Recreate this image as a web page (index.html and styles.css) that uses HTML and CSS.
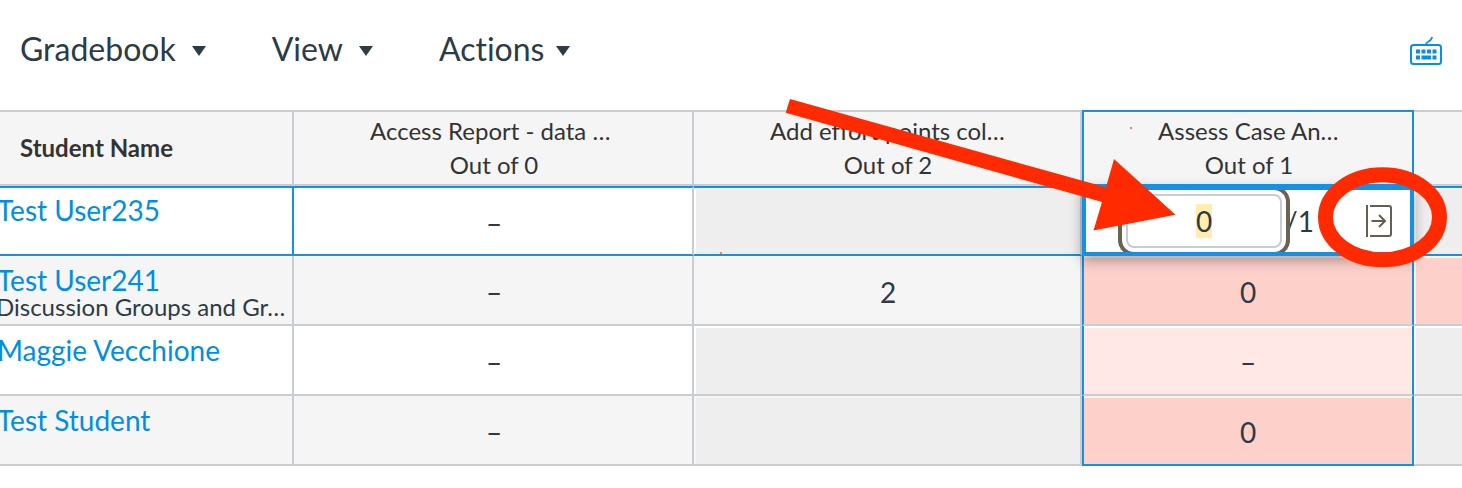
FILE: index.html
```html
<!DOCTYPE html>
<html lang="en">
<head>
<meta charset="utf-8">
<title>Gradebook</title>
<link rel="stylesheet" href="styles.css">
</head>
<body>
<header class="toolbar">
  <nav class="menus" aria-label="Gradebook menus">
    <button class="menu" type="button">Gradebook <span class="caret"></span></button>
    <button class="menu" type="button">View <span class="caret"></span></button>
    <button class="menu menu-tight" type="button">Actions <span class="caret"></span></button>
  </nav>
  <button class="icon-button" type="button" aria-label="Keyboard shortcuts">
    <svg width="32" height="30" viewBox="0 0 32 30" fill="none" stroke="currentColor">
      <rect x="1" y="9" width="30" height="19" rx="2.5" stroke-width="2"/>
      <path d="M16 8.500C16 4.500 21.500 6.500 22 1" stroke-width="1.800"/>
      <path d="M6 15.500h4M11.500 15.500h4M17 15.500h4M22.500 15.500h4M6 21.500h4M11.500 21.500h9.500M22.500 21.500h4" stroke-width="4"/>
    </svg>
  </button>
</header>

<main>
<table class="grid">
  <colgroup>
    <col class="col-student"><col class="col-access"><col class="col-effort"><col class="col-assess"><col>
  </colgroup>
  <thead>
    <tr>
      <th class="student-head" scope="col">Student Name</th>
      <th scope="col"><span class="title">Access Report - data …</span><span class="points">Out of 0</span></th>
      <th scope="col"><span class="title">Add effort points col…</span><span class="points">Out of 2</span></th>
      <th class="active" scope="col"><span class="title">Assess Case An…</span><span class="points">Out of 1</span></th>
      <th scope="col" aria-label="Next assignment"></th>
    </tr>
  </thead>
  <tbody>
    <tr class="current">
      <td class="student"><a href="#">Test User235</a></td>
      <td>–</td>
      <td class="closed"></td>
      <td class="active editing">
        <div class="editor">
          <input class="grade" type="text" value="0" aria-label="Grade for Test User235">
          <span class="out-of">/1</span>
          <button class="tray-button" type="button" aria-label="Open submission tray">
            <svg width="26" height="32" viewBox="0 0 26 32" fill="none" stroke="currentColor" stroke-width="2">
              <path d="M1 0v32"/>
              <path d="M4 1h19q2 0 2 2v26q0 2-2 2H4"/>
              <path d="M5.500 16h13.500M13 10l6 6-6 6"/>
            </svg>
          </button>
        </div>
      </td>
      <td class="closed"></td>
    </tr>
    <tr class="even">
      <td class="student"><a href="#">Test User241</a><span class="section">Discussion Groups and Gr…</span></td>
      <td>–</td>
      <td>2</td>
      <td class="active missing">0</td>
      <td class="missing"></td>
    </tr>
    <tr>
      <td class="student"><a href="#">Maggie Vecchione</a></td>
      <td>–</td>
      <td class="closed"></td>
      <td class="active late">–</td>
      <td class="closed"></td>
    </tr>
    <tr class="even">
      <td class="student"><a href="#">Test Student</a></td>
      <td>–</td>
      <td class="closed"></td>
      <td class="active missing">0</td>
      <td class="closed"></td>
    </tr>
  </tbody>
</table>
</main>

<svg class="annotation" width="1462" height="488" viewBox="0 0 1462 488" aria-hidden="true">
  <path d="M790 99L1106 187.300L1114 159L1175.500 214.700L1093.500 230.500L1102 202L785.700 112.700Z" fill="#ff2a00"/>
  <ellipse cx="1382.500" cy="217.300" rx="57" ry="42.500" fill="none" stroke="#ff2a00" stroke-width="15"/>
  <path d="M1130 128h2M720 253h2" stroke="#ff7a66" stroke-width="2"/>
</svg>
</body>
</html>
```

FILE: styles.css
```css
* { box-sizing: border-box; }

body {
  margin: 0;
  background: #fff;
  color: #2d3b45;
  font-family: Lato, "Liberation Sans", sans-serif;
  font-size: 28px;
  font-variant-ligatures: none;
  overflow-x: hidden;
}

button {
  padding: 0;
  border: 0;
  background: none;
  color: inherit;
  font: inherit;
  font-variant-ligatures: none;
}

.toolbar {
  display: flex;
  justify-content: space-between;
  padding: 30px 20px 42px;
}

.menus {
  display: flex;
  gap: 66px;
}

.menu {
  display: flex;
  align-items: center;
  gap: 16px;
  font-size: 32px;
  line-height: 38px;
}

.menu-tight { gap: 12px; }

.caret {
  margin-top: 4px;
  border: 7px solid transparent;
  border-top: 10px solid #2d3b45;
  border-bottom: 0;
}

.icon-button {
  display: flex;
  align-items: flex-end;
  padding-bottom: 2px;
  color: #0a8ee2;
}

.grid {
  width: 100%;
  table-layout: fixed;
  border-collapse: separate;
  border-spacing: 0;
}

.col-student { width: 294px; }
.col-access { width: 400px; }
.col-effort { width: 388px; }
.col-assess { width: 332px; }

th, td {
  height: 70px;
  padding: 0;
  border-right: 2px solid #c7cdd1;
  border-bottom: 2px solid #c7cdd1;
  text-align: center;
  white-space: nowrap;
}

td { padding: 4px 0 0 2px; }

th:last-child, td:last-child { border-right: 0; }

th {
  height: 76px;
  border-top: 2px solid #c7cdd1;
  background: #f5f5f5;
  color: #333;
  font-size: 24px;
  font-weight: 400;
  line-height: 34px;
}

.student-head {
  padding-left: 20px;
  font-weight: 700;
  text-align: left;
}

.title {
  display: block;
  margin: 0 74px 0 76px;
  text-align: left;
}

.active .title { margin: 0 74px; }

.points {
  display: block;
  padding-left: 2px;
}

.even td { background: #f5f5f5; }

td.student {
  padding: 0;
  vertical-align: top;
  text-align: left;
}

.student a {
  display: block;
  margin: 7px 0 0 -3px;
  color: #008ee2;
  line-height: 34px;
  text-decoration: none;
}

.section {
  display: block;
  margin-left: -4px;
  font-size: 24px;
  line-height: 20px;
}

td.closed, .even td.closed {
  background: #eee;
  box-shadow: inset 2px 2px 0 #fff;
}

.even td.closed { box-shadow: inset 2px 2px 0 #f5f5f5; }

.even td.missing {
  background: #fdd0ca;
  box-shadow: inset 2px 2px 0 #f5f5f5;
}

.active {
  border-right-color: #1790df;
  border-left: 2px solid #1790df;
}

td.active { padding-left: 0; }

th.active { border-top-color: #1790df; }

td.late {
  background: #ffe8e6;
  box-shadow: inset 0 2px 0 #fff;
}

.even td.active.missing { box-shadow: inset 0 2px 0 #f5f5f5; }

tbody tr:last-child .active { border-bottom-color: #1790df; }

.current td {
  border-top: 2px solid #1790df;
  border-bottom-color: #1790df;
}

.current .student { border-right-color: #1790df; }
.current .student a { margin-top: 5px; }
.current td.closed { box-shadow: inset 2px 0 0 #fff; }

.current td.editing {
  position: relative;
  padding: 0;
  border: 4px solid #1790df;
  background: #fff;
  box-shadow: 0 -2px 0 #1790df, 0 4px 12px rgba(0, 0, 0, 0.35);
}

.editor {
  display: flex;
  align-items: center;
  height: 62px;
  padding: 0 18px 0 40px;
  overflow: hidden;
}

.grade {
  position: relative;
  z-index: 1;
  width: 156px;
  height: 54px;
  padding: 0;
  border: 2px solid #c7cdd1;
  border-radius: 8px;
  outline: 0;
  background: linear-gradient(#ffeeae, #ffeeae) center / 16px 34px no-repeat #fff;
  box-shadow: 0 0 0 4px #fff, 0 0 0 8px #6a6253;
  color: #2d3b45;
  font: inherit;
  text-align: center;
}

.out-of { margin-left: 3px; }

.tray-button {
  display: flex;
  margin-left: auto;
  color: #665e50;
}

.annotation {
  position: absolute;
  z-index: 2;
  top: 0;
  left: 0;
  pointer-events: none;
}
```
